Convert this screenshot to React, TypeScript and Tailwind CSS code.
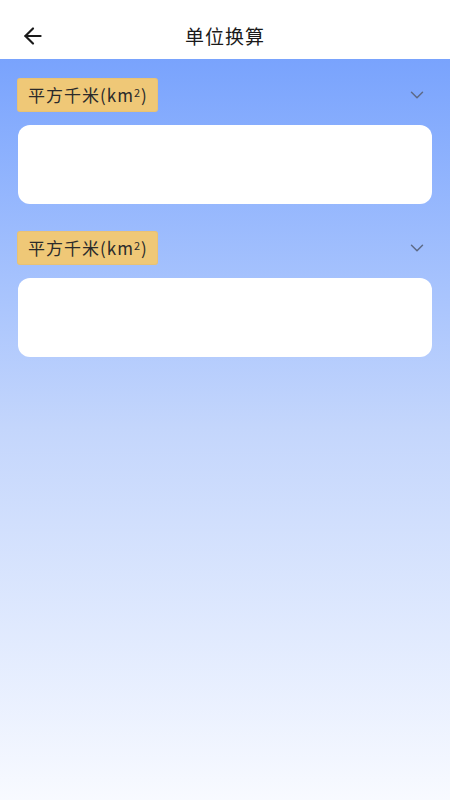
import React from 'react';
import { ArrowLeft, ChevronDown } from 'lucide-react';

const UnitBlock: React.FC<{ label: string }> = ({ label }) => (
  <div>
    <div className="flex items-center justify-between h-[32px]">
      <div className="h-[32px] pl-[10px] pr-[9px] flex items-center bg-[#efc877] rounded-[2px] shadow-[0_0_0_1px_#e9c273]">
        <span className="text-[17px] text-[#2b2b2b] tracking-[1px]">
          {label}(km<sup className="text-[11px] -top-[0.45em]">2</sup>)
        </span>
      </div>
      <ChevronDown className="w-[22px] h-[22px] text-[#5d6a86] mr-[4px]" strokeWidth={1.6} />
    </div>
    <div className="mt-[14px] h-[79px] bg-white rounded-[12px]" />
  </div>
);

const App: React.FC = () => {
  return (
    <div
      className="min-h-screen w-full flex flex-col"
      style={{ fontFamily: '"Noto Sans CJK SC", "Noto Sans", sans-serif' }}
    >
      <div className="h-[59px] bg-white flex items-center relative pt-[14px]">
        <ArrowLeft className="absolute left-[20px] top-[23px] w-[26px] h-[26px] text-[#1a1a1a]" strokeWidth={2} />
        <h1 className="w-full text-center text-[19px] text-[#1a1a1a] tracking-[1px]">单位换算</h1>
      </div>
      <div className="flex-1 min-h-[741px] bg-gradient-to-b from-[#79a3fd] via-[#c4d6fc] to-[#f8faff] px-[18px] pt-[20px]">
        <div className="flex flex-col gap-[28px]">
          <UnitBlock label="平方千米" />
          <UnitBlock label="平方千米" />
        </div>
      </div>
    </div>
  );
};

export default App;
